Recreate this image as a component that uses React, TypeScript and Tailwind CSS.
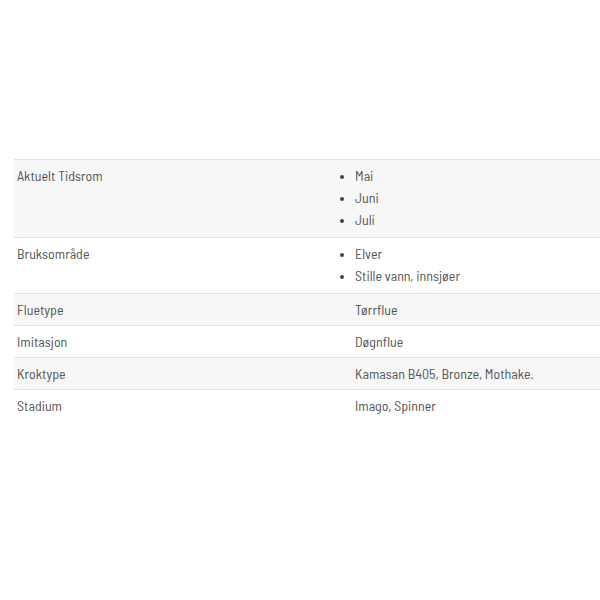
import React from 'react';

const rows: { label: string; value: string | string[] }[] = [
  { label: 'Aktuelt Tidsrom', value: ['Mai', 'Juni', 'Juli'] },
  { label: 'Bruksområde', value: ['Elver', 'Stille vann, innsjøer'] },
  { label: 'Fluetype', value: 'Tørrflue' },
  { label: 'Imitasjon', value: 'Døgnflue' },
  { label: 'Kroktype', value: 'Kamasan B405, Bronze, Mothake.' },
  { label: 'Stadium', value: 'Imago, Spinner' },
];

const App: React.FC = () => {
  return (
    <div
      className="w-[600px] h-[600px] bg-white overflow-hidden pt-[159px] pl-[14px]"
      style={{ fontFamily: '"Barlow Semi Condensed", "Roboto Condensed", "DejaVu Sans Condensed", "Liberation Sans", sans-serif' }}
    >
      <table className="w-[600px] border-collapse text-[14px] text-[#555]">
        <tbody>
          {rows.map((row, idx) => (
            <tr
              key={row.label}
              className={`border-t border-[#e4e4e4] ${idx % 2 === 0 ? 'bg-[#f7f7f7]' : 'bg-white'}`}
            >
              <td className="w-[326px] align-top pl-[3px] py-[5px] leading-[21px]">{row.label}</td>
              <td className="align-top pl-[15px] py-[5px] leading-[21px]">
                {Array.isArray(row.value) ? (
                  <ul className="list-disc pl-0 pb-[1px] marker:text-[#444] marker:text-[12px]">
                    {row.value.map((v) => (
                      <li key={v} className="leading-[22px]">{v}</li>
                    ))}
                  </ul>
                ) : (
                  row.value
                )}
              </td>
            </tr>
          ))}
        </tbody>
      </table>
    </div>
  );
};

export default App;
